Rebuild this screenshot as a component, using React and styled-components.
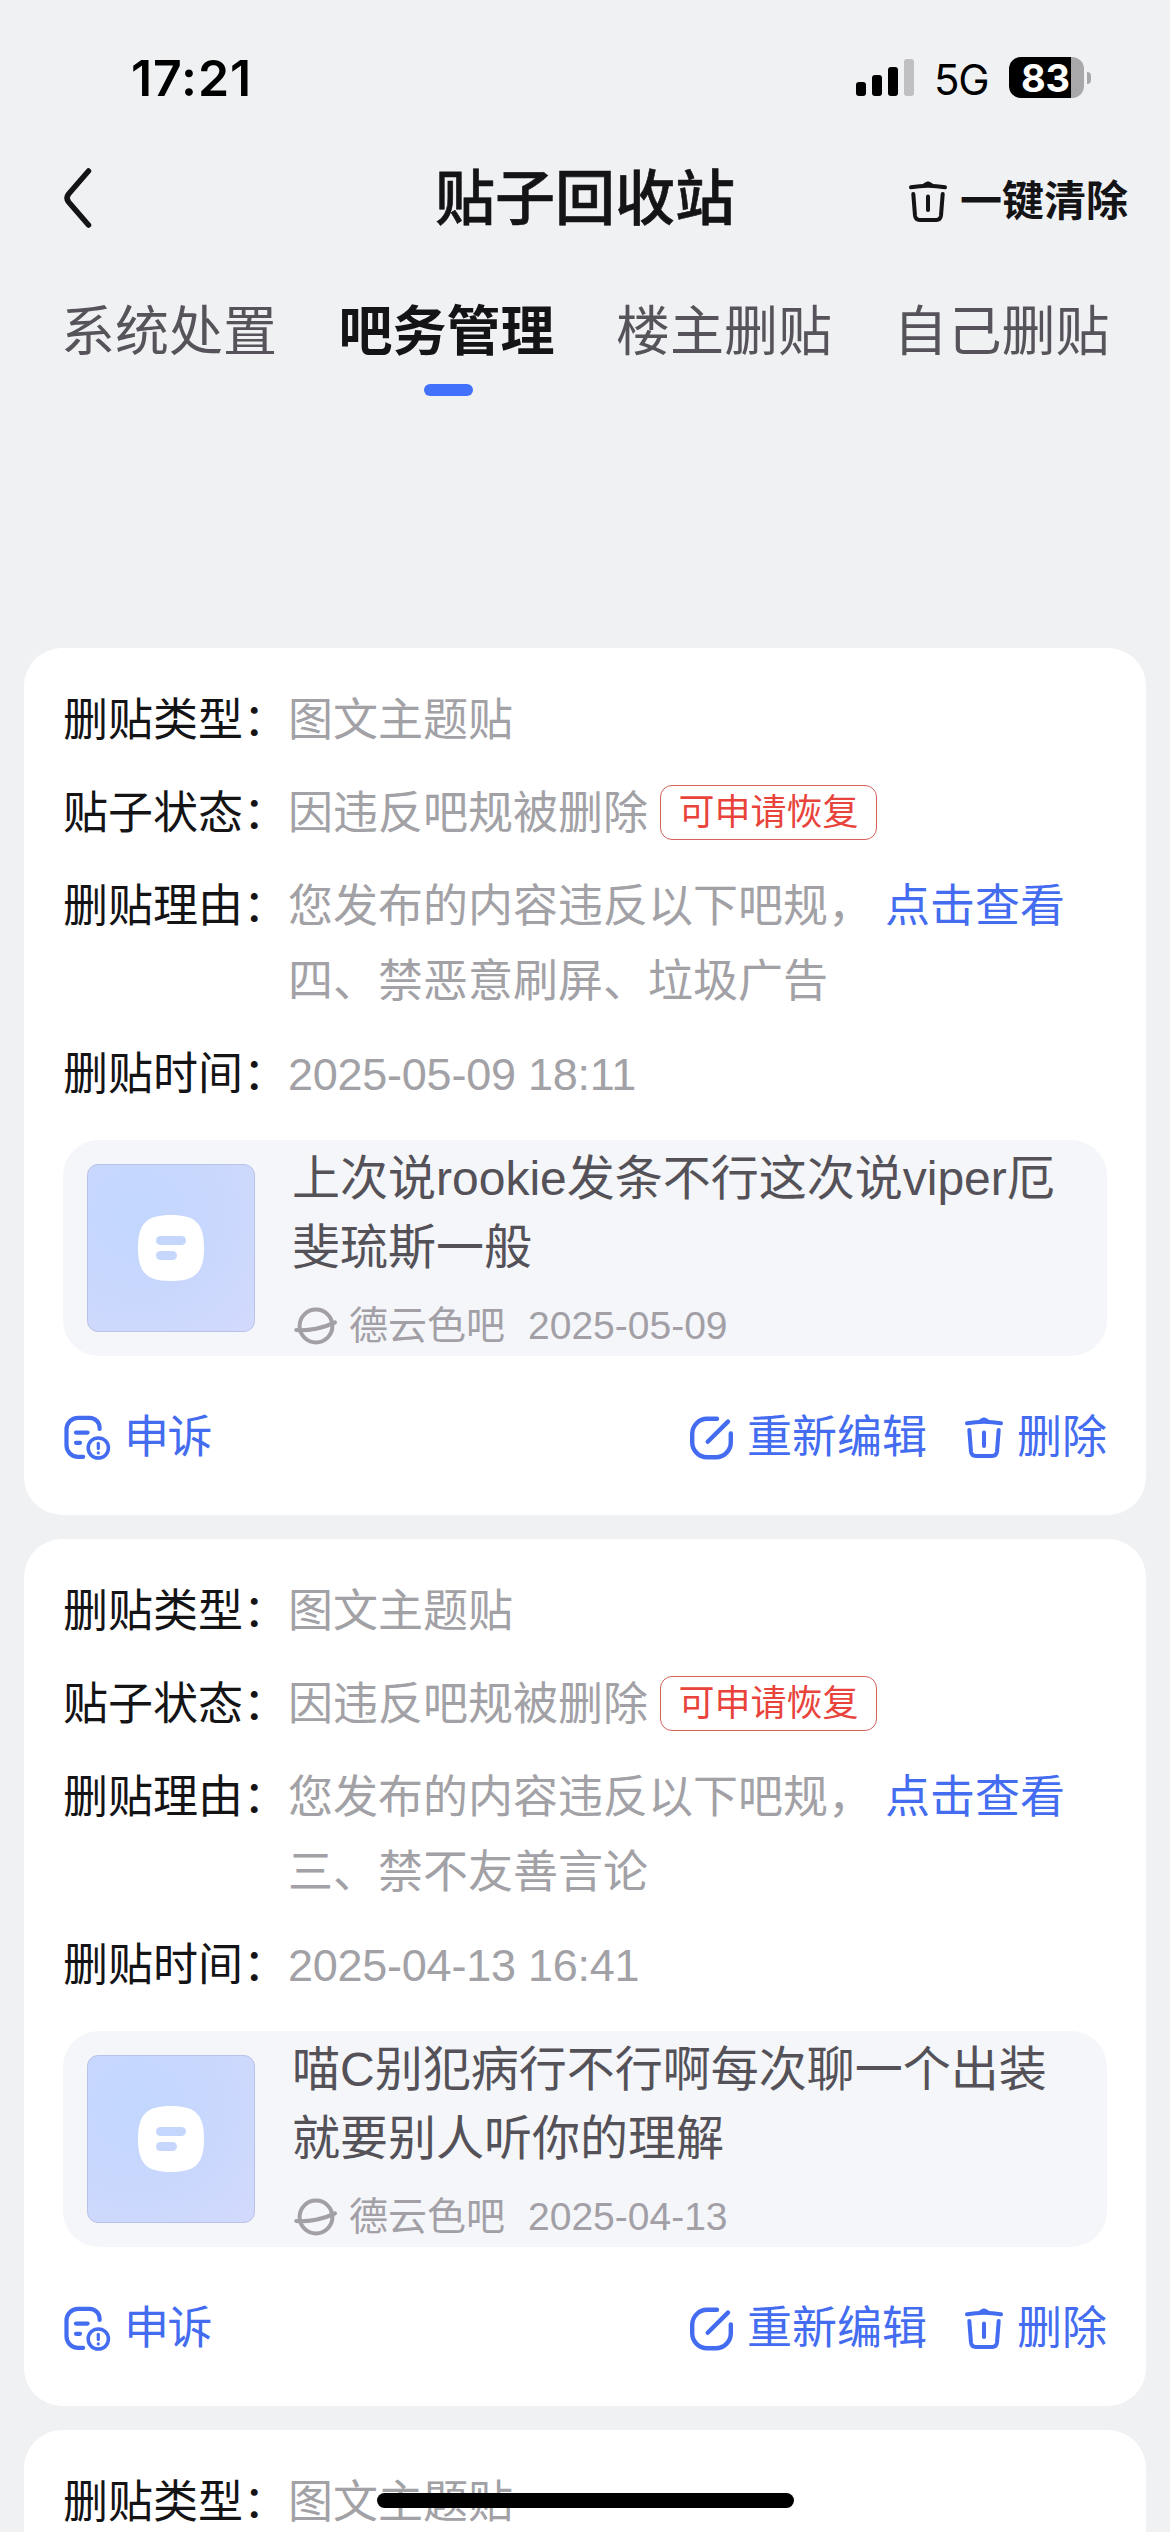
import React from "react";
import styled, { createGlobalStyle } from "styled-components";

const Global = createGlobalStyle`
  * { box-sizing: border-box; }
  html, body { margin: 0; padding: 0; background: #f0f1f3; }
  body { font-family: "Liberation Sans", "Noto Sans CJK SC", sans-serif; color: #141416; }
`;

const Screen = styled.div`
  position: relative;
  width: 1170px;
  height: 2532px;
  overflow: hidden;
  background: #f0f1f3;
`;

const StatusBar = styled.header`
  height: 141px;
  padding: 57px 79px 0 131px;
  display: flex;
  justify-content: space-between;
  align-items: flex-start;
  font-family: Inter, sans-serif;
  color: #000;
`;

const Clock = styled.div`
  font-size: 50px;
  font-weight: 600;
  line-height: 42px;
  letter-spacing: 0.9px;
`;

const StatusIcons = styled.div`
  display: flex;
  align-items: flex-start;
`;

const Network = styled.span`
  font-size: 42px;
  font-weight: 400;
  line-height: 45px;
  width: 75px;
  padding-left: 20px;
  letter-spacing: -1.2px;
`;

const Battery = styled.div`
  margin-left: 20px;
  width: 75px;
  height: 41px;
  border-radius: 12px;
  background: linear-gradient(90deg, #000 62px, #a8a8aa 62px);
  color: #fff;
  font-size: 38px;
  font-weight: 700;
  line-height: 42px;
  padding-left: 12px;
  letter-spacing: -0.3px;
`;

const BatteryTip = styled.div`
  width: 4px;
  height: 12px;
  margin: 15px 0 0 3px;
  border-radius: 0 6px 6px 0;
  background: #a8a8aa;
`;

const NavBar = styled.nav`
  height: 114px;
  padding: 0 42px 0 60px;
  display: grid;
  grid-template-columns: 1fr auto 1fr;
  align-items: center;
`;

const BackButton = styled.button`
  justify-self: start;
  display: flex;
  padding: 0;
  border: 0;
  background: none;
`;

const Title = styled.h1`
  margin: 3px 0 0 -18px;
  font-size: 60px;
  font-weight: 500;
  line-height: 84px;
  -webkit-text-stroke: 0.6px currentColor;
`;

const ClearButton = styled.button`
  justify-self: end;
  display: flex;
  align-items: center;
  gap: 8px;
  margin-top: 8px;
  padding: 0;
  border: 0;
  background: none;
  color: #141416;
  font: 700 42px/60px "Liberation Sans", "Noto Sans CJK SC", sans-serif;
`;

const Tabs = styled.div`
  height: 393px;
  padding: 38px 61px 0;
  display: flex;
  gap: 61.5px;
`;

const Tab = styled.div`
  width: 216px;
  display: flex;
  flex-direction: column;
  align-items: center;
  font-size: 54px;
  line-height: 78px;
  white-space: nowrap;
  font-weight: ${(p) => (p.$active ? 700 : 400)};
  color: ${(p) => (p.$active ? "#141416" : "#56545a")};
  &::after {
    content: "";
    width: 49px;
    height: 12px;
    margin: 13px 0 0 4px;
    border-radius: 6px;
    background: ${(p) => (p.$active ? "#4271fb" : "transparent")};
  }
`;

const List = styled.main`
  padding: 0 24px;
  display: flex;
  flex-direction: column;
  gap: 24px;
`;

const Card = styled.article`
  height: 867px;
  padding: 35px 39px 0;
  border-radius: 38px;
  background: #fff;
`;

const Fields = styled.dl`
  margin: 0;
  display: grid;
  grid-template-columns: 225px 1fr;
  row-gap: 18px;
  font-size: 45px;
  line-height: 75px;
  white-space: nowrap;
`;

const Label = styled.dt`
  margin: 0;
`;

const Value = styled.dd`
  margin: 0;
  display: flex;
  align-items: flex-start;
  color: #a2a1a6;
`;

const Time = styled.time`
  letter-spacing: -0.25px;
`;

const Reason = styled.span`
  white-space: pre-line;
`;

const Tag = styled.span`
  margin: 9px 0 0 12px;
  width: 217px;
  height: 55px;
  border: 1.5px solid #d4615a;
  border-radius: 12px;
  font-size: 36px;
  line-height: 53px;
  text-align: center;
  color: #e8443c;
`;

const Link = styled.a`
  margin-left: 12px;
  color: #446cf0;
`;

const Quote = styled.section`
  height: 216px;
  margin-top: 28px;
  padding: 0 24px;
  display: flex;
  align-items: center;
  gap: 37px;
  border-radius: 36px;
  background: #f5f6f9;
`;

const Thumb = styled.div`
  flex: none;
  width: 168px;
  height: 168px;
  display: flex;
  align-items: center;
  justify-content: center;
  border: 1px solid #b9c2e8;
  border-radius: 11px;
  background: radial-gradient(circle at 30% 30%, #c2d7fd 0%, #c9d7fd 50%, #d3dafd 100%);
`;

const QuoteBody = styled.div`
  height: 216px;
  padding-top: 4px;
`;

const QuoteTitle = styled.p`
  margin: 0;
  font-size: 48px;
  line-height: 69px;
  color: #545258;
  white-space: pre;
`;

const Meta = styled.div`
  margin-top: 14px;
  display: flex;
  align-items: center;
  font-size: 39px;
  line-height: 60px;
  color: #a2a0a6;
`;

const ForumName = styled.span`
  margin: 0 23px 0 9px;
`;

const Actions = styled.footer`
  margin-top: 44px;
  height: 75px;
  display: flex;
  align-items: center;
  font-size: 45px;
  line-height: 75px;
  color: #446cf0;
`;

const Action = styled.span`
  display: flex;
  align-items: center;
  gap: ${(p) => p.$gap}px;
  letter-spacing: ${(p) => p.$tracking || 0}px;
  margin-left: ${(p) => (p.$push ? "auto" : p.$left ? `${p.$left}px` : 0)};
`;

const HomeIndicator = styled.div`
  position: absolute;
  left: 377px;
  top: 2493px;
  width: 417px;
  height: 15px;
  border-radius: 8px;
  background: #000;
`;

const SignalIcon = () => (
  <svg width="58" height="41" viewBox="0 0 58 41">
    <rect x="0" y="25" width="10" height="14" rx="3" />
    <rect x="16" y="18" width="10" height="21" rx="3" />
    <rect x="32" y="10" width="10" height="29" rx="3" />
    <rect x="48" y="2" width="10" height="37" rx="3" fill="#c0c0c2" />
  </svg>
);

const BackIcon = () => (
  <svg width="36" height="66" viewBox="0 0 36 66" fill="none" stroke="#141416" strokeWidth="5.5" strokeLinecap="round">
    <path d="M28.5 6 L8.6 29 Q5.4 33 8.6 37 L28.5 60" />
  </svg>
);

const TrashIcon = () => (
  <svg width="48" height="48" viewBox="0 0 48 48" fill="none" stroke="currentColor" strokeWidth="4" strokeLinecap="round" strokeLinejoin="round">
    <path d="M7 9.3 Q24 6 41 9.3" />
    <path d="M21 6.8 L24 5.4 L27 6.8" />
    <path d="M9.3 16 L11 37.5 Q11.6 42 15.8 42 H32.2 Q36.4 42 37 37.5 L38.7 16" />
    <path d="M24 18.5 V32" />
  </svg>
);

const EditIcon = () => (
  <svg width="48" height="48" viewBox="0 0 48 48" fill="none" stroke="currentColor" strokeWidth="4.4" strokeLinecap="round">
    <path d="M30 4.8 H20.2 A15 15 0 0 0 5.2 19.8 V28.3 A15 15 0 0 0 20.2 43.3 H28.8 A15 15 0 0 0 43.8 28.3 V19.5" />
    <path d="M20.7 27.8 L41 7.6" />
  </svg>
);

const AppealIcon = () => (
  <svg width="48" height="48" viewBox="0 0 48 48" fill="none" stroke="currentColor" strokeWidth="4.2" strokeLinecap="round">
    <path d="M36.6 15 V13.8 A10 10 0 0 0 26.6 3.8 H15 A11.5 11.5 0 0 0 3.5 15.3 V31.3 A11.5 11.5 0 0 0 15 42.8 H20.2" />
    <path d="M13 18.6 H24.6" />
    <path d="M13 28.8 H17" />
    <circle cx="35.3" cy="34" r="10.1" strokeWidth="3.5" />
    <path d="M35.3 29.3 V34.4" strokeWidth="3.2" />
    <path d="M35.3 38.8 V38.9" strokeWidth="3.2" />
  </svg>
);

const PlanetIcon = () => (
  <svg width="48" height="48" viewBox="0 0 48 48" fill="none" stroke="#a2a0a6" strokeWidth="4" strokeLinecap="round">
    <circle cx="24" cy="24" r="16.4" />
    <path d="M4.2 28 C16 29 32 26 43 20.4" />
  </svg>
);

const PostGlyph = () => (
  <svg width="66" height="66" viewBox="0 0 66 66">
    <path fill="#fff" d="M33 0 C57 0 66 8 66 33 C66 58 57 66 33 66 C9 66 0 58 0 33 C0 8 9 0 33 0 Z" />
    <rect x="18" y="21" width="30" height="9" rx="4.5" fill="#c5d6fd" />
    <rect x="18" y="36" width="21" height="9" rx="4.5" fill="#c7d6fd" />
  </svg>
);

const tabs = ["系统处置", "吧务管理", "楼主删贴", "自己删贴"];

const posts = [
  {
    rule: "四、禁恶意刷屏、垃圾广告",
    time: "2025-05-09 18:11",
    title: "上次说rookie发条不行这次说viper厄\n斐琉斯一般",
    date: "2025-05-09",
  },
  {
    rule: "三、禁不友善言论",
    time: "2025-04-13 16:41",
    title: "喵C别犯病行不行啊每次聊一个出装\n就要别人听你的理解",
    date: "2025-04-13",
  },
];

const PostCard = ({ post }) => (
  <Card>
    <Fields>
      <Label>删贴类型：</Label>
      <Value>图文主题贴</Value>
      <Label>贴子状态：</Label>
      <Value>
        因违反吧规被删除<Tag>可申请恢复</Tag>
      </Value>
      <Label>删贴理由：</Label>
      <Value>
        <Reason>{"您发布的内容违反以下吧规，\n" + post.rule}</Reason>
        <Link>点击查看</Link>
      </Value>
      <Label>删贴时间：</Label>
      <Value>
        <Time>{post.time}</Time>
      </Value>
    </Fields>
    <Quote>
      <Thumb>
        <PostGlyph />
      </Thumb>
      <QuoteBody>
        <QuoteTitle>{post.title}</QuoteTitle>
        <Meta>
          <PlanetIcon />
          <ForumName>德云色吧</ForumName>
          {post.date}
        </Meta>
      </QuoteBody>
    </Quote>
    <Actions>
      <Action $gap={13} $tracking={-1.5}>
        <AppealIcon />
        申诉
      </Action>
      <Action $gap={12} $push>
        <EditIcon />
        重新编辑
      </Action>
      <Action $gap={9} $left={33}>
        <TrashIcon />
        删除
      </Action>
    </Actions>
  </Card>
);

export default function App() {
  return (
    <Screen>
      <Global />
      <StatusBar>
        <Clock>17:21</Clock>
        <StatusIcons>
          <SignalIcon />
          <Network>5G</Network>
          <Battery>83</Battery>
          <BatteryTip />
        </StatusIcons>
      </StatusBar>
      <NavBar>
        <BackButton aria-label="返回">
          <BackIcon />
        </BackButton>
        <Title>贴子回收站</Title>
        <ClearButton>
          <TrashIcon />
          一键清除
        </ClearButton>
      </NavBar>
      <Tabs>
        {tabs.map((name, i) => (
          <Tab key={name} $active={i === 1}>
            {name}
          </Tab>
        ))}
      </Tabs>
      <List>
        {posts.map((post) => (
          <PostCard key={post.date} post={post} />
        ))}
        <Card>
          <Fields>
            <Label>删贴类型：</Label>
            <Value>图文主题贴</Value>
          </Fields>
        </Card>
      </List>
      <HomeIndicator />
    </Screen>
  );
}
